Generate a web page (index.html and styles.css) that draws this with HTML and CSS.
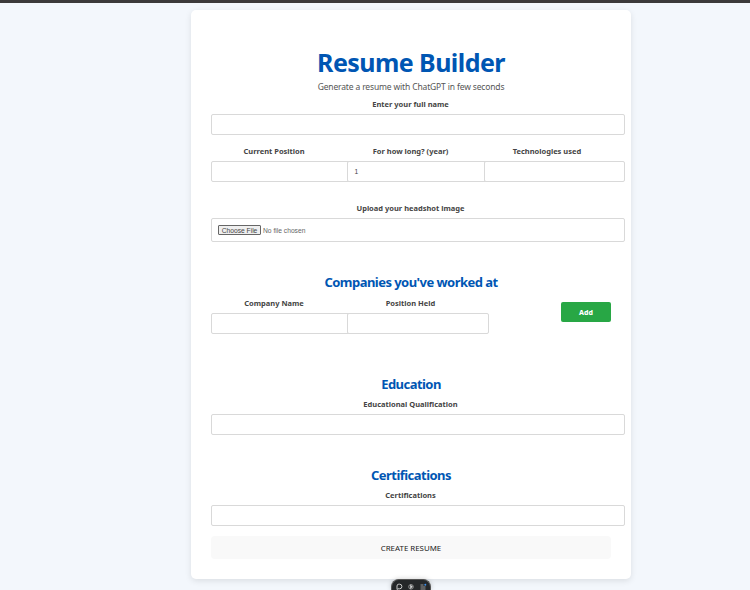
FILE: index.html
```html
<!DOCTYPE html>
<html lang="en">
<head>
<meta charset="utf-8">
<title>Resume Builder</title>
<link rel="stylesheet" href="styles.css">
</head>
<body>
<main class="card">
  <h1>Resume Builder</h1>
  <p class="subtitle">Generate a resume with ChatGPT in few seconds</p>
  <form>
    <div class="field">
      <label for="name">Enter your full name</label>
      <input id="name" type="text">
    </div>
    <div class="row">
      <div class="field"><label for="position">Current Position</label><input id="position" type="text"></div>
      <div class="field"><label for="years">For how long? (year)</label><input id="years" type="text" value="1"></div>
      <div class="field"><label for="tech">Technologies used</label><input id="tech" type="text"></div>
    </div>
    <div class="field upload">
      <label>Upload your headshot image</label>
      <div class="file"><span class="choose">Choose File</span><span class="none">No file chosen</span></div>
    </div>
    <h2 class="h-companies">Companies you've worked at</h2>
    <div class="row">
      <div class="field"><label for="company">Company Name</label><input id="company" type="text"></div>
      <div class="field"><label for="held">Position Held</label><input id="held" type="text"></div>
      <button class="add" type="button">Add</button>
    </div>
    <h2 class="h-education">Education</h2>
    <div class="field">
      <label for="edu">Educational Qualification</label>
      <input id="edu" type="text">
    </div>
    <h2 class="h-cert">Certifications</h2>
    <div class="field">
      <label for="cert">Certifications</label>
      <input id="cert" type="text">
    </div>
    <button class="create" type="button">CREATE RESUME</button>
  </form>
</main>
<div class="toolbar">
  <svg width="40" height="15" viewBox="0 0 40 15" fill="none">
    <path d="M6 10.500v-3.500a1.800 1.800 0 0 1 1.800-1.800h.8a2.300 2.300 0 0 1 0 4.600h-1.600z" stroke="#ddd" stroke-width=".9"/>
    <circle cx="20" cy="7.800" r="2.300" stroke="#999" stroke-width=".9"/>
    <path d="M19.500 6v3.600l2-1.800z" fill="#ddd" stroke="#ddd" stroke-width=".5"/>
    <path d="M29.500 6h3M29.500 8h5M29.500 10h5" stroke="#999"/>
    <circle cx="34.300" cy="5.700" r="1" fill="#3b8eea"/>
  </svg>
</div>
</body>
</html>
```
FILE: styles.css
```css
* { box-sizing: border-box; }
body {
  margin: 0;
  height: 590px;
  overflow: hidden;
  border-top: 3px solid #3c3a3b;
  background: #f3f7fc;
  font-family: "Noto Sans", "Open Sans", sans-serif;
  color: #333;
  text-align: center;
}
.card {
  width: 440px;
  height: 569px;
  margin: 7px 0 0 191px;
  padding: 35px 20px 20px;
  background: #fff;
  border-radius: 5px;
  box-shadow: 0 2px 6px rgba(0, 0, 0, .1);
}
h1, h2, p { margin: 0; white-space: nowrap; }
h1 { height: 35px; font-size: 25px; line-height: 34px; letter-spacing: -.56px; color: #0056b3; }
.subtitle { height: 18px; font-size: 8.500px; line-height: 14px; letter-spacing: -.15px; color: #555; }
h2 { height: 24px; font-size: 13px; line-height: 18px; letter-spacing: -.54px; color: #0056b3; }
label {
  display: block;
  height: 16px;
  margin-left: -1px;
  font-size: 7.500px;
  font-weight: 700;
  line-height: 12px;
  white-space: nowrap;
  color: #444;
}
input, .file {
  display: block;
  width: calc(100% + 14px);
  height: 21px;
  margin: 0;
  padding: 0 6px;
  border: 1px solid #d9d9d9;
  border-radius: 2px;
  background: #fff;
  font-family: "Liberation Sans", sans-serif;
  font-size: 6.700px;
  color: #444;
  outline: none;
}
.row {
  display: grid;
  grid-template-columns: repeat(3, minmax(0, 1fr));
  gap: 9.300px;
}
.field + .row { margin-top: 10px; }
.upload { margin-top: 20px; }
.file { display: flex; align-items: center; gap: 2px; height: 24px; }
.choose {
  width: 43px;
  height: 10px;
  border: 1px solid #666;
  border-radius: 1px;
  background: #efefef;
  line-height: 9px;
}
.none { color: #666; }
.h-companies { margin-top: 31px; }
.h-education { margin-top: 41px; height: 23px; }
.h-cert { margin-top: 31px; height: 23px; }
button { display: block; border: 0; font-family: inherit; padding: 0; }
.add {
  justify-self: end;
  width: 50px;
  height: 20px;
  margin-top: 5px;
  border-radius: 2px;
  background: #28a745;
  color: #fff;
  font-size: 7px;
  font-weight: 800;
}
.create {
  width: 100%;
  height: 23px;
  margin-top: 10px;
  border-radius: 4px;
  background: #f9f9f9;
  color: #222;
  font-size: 7.900px;
}
.toolbar {
  position: absolute;
  left: 391px;
  top: 579px;
  width: 40px;
  height: 11px;
  overflow: hidden;
  border: 1px solid #555;
  border-bottom: 0;
  border-radius: 8px 8px 0 0;
  background: #252729;
  box-shadow: 0 0 5px rgba(0, 0, 0, .2);
}
.toolbar svg { display: block; margin-left: -1px; margin-top: -1px; }
```
